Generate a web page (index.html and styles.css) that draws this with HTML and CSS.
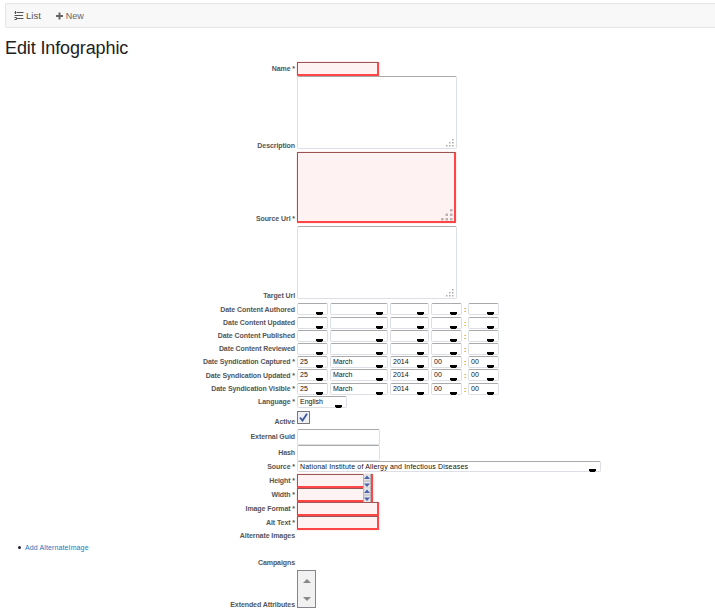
FILE: index.html
```html
<!DOCTYPE html>
<html lang="en">
<head>
<meta charset="utf-8">
<title>Edit Infographic</title>
<link rel="stylesheet" href="styles.css">
</head>
<body>
<nav class="navbar">
  <a class="nav-item"><svg class="icon" width="10" height="9" viewBox="0 0 10 9"><path d="M3 1.500h6.500M2 4.500h7M3 7.500h6.500" stroke="#555" stroke-width="1.200"/><path d="M.5 1.500h2M1.500 0v3M.5 4.500h2M.5 6.500h2v2h-2" fill="none" stroke="#555"/></svg><span class="nav-list">List</span></a>
  <a class="nav-item"><svg class="icon" width="8" height="8" viewBox="0 0 8 8"><path d="M3.500 .5v7M0 4h7" stroke="#666" stroke-width="2"/></svg><span class="nav-new">New</span></a>
</nav>
<h1>Edit Infographic</h1>
<form>
  <div class="row h14"><label>Name *</label><input class="error w82" type="text"></div>
  <div class="row tall area"><label>Description</label><div class="area-box"><textarea></textarea><svg class="grip" width="8" height="8" viewBox="0 0 8 8"><path d="M6 0h1.500v1.500H6zM3 3h1.500v1.500H3zM6 3h1.500v1.500H6zM0 6h1.500v1.500H0zM3 6h1.500v1.500H3zM6 6h1.500v1.500H6z"/></svg></div></div>
  <div class="row tall area-error"><label>Source Url *</label><div class="area-box"><textarea class="error"></textarea><svg class="grip big" width="12" height="12" viewBox="0 0 12 12"><path d="M9 0h2.500v2.500H9zM4.500 4.500H7V7H4.500zM9 4.500h2.500V7H9zM0 9h2.500v2.500H0zM4.500 9H7v2.500H4.500zM9 9h2.500v2.500H9z"/></svg></div></div>
  <div class="row tall area last"><label>Target Url</label><div class="area-box"><textarea></textarea><svg class="grip" width="8" height="8" viewBox="0 0 8 8"><path d="M6 0h1.500v1.500H6zM3 3h1.500v1.500H3zM6 3h1.500v1.500H6zM0 6h1.500v1.500H0zM3 6h1.500v1.500H3zM6 6h1.500v1.500H6z"/></svg></div></div>

  <div class="row date h14"><label>Date Content Authored</label><span class="select w31"></span><span class="select w58"></span><span class="select w39"></span><span class="select w31"></span><i>:</i><span class="select w31"></span></div>
  <div class="row date raised h13"><label>Date Content Updated</label><span class="select w31"></span><span class="select w58"></span><span class="select w39"></span><span class="select w31"></span><i>:</i><span class="select w31"></span></div>
  <div class="row date raised h13"><label>Date Content Published</label><span class="select w31"></span><span class="select w58"></span><span class="select w39"></span><span class="select w31"></span><i>:</i><span class="select w31"></span></div>
  <div class="row date raised h13"><label>Date Content Reviewed</label><span class="select w31"></span><span class="select w58"></span><span class="select w39"></span><span class="select w31"></span><i>:</i><span class="select w31"></span></div>
  <div class="row date raised h13"><label>Date Syndication Captured *</label><span class="select w31">25</span><span class="select w58">March</span><span class="select w39">2014</span><span class="select w31">00</span><i>:</i><span class="select w31">00</span></div>
  <div class="row date h14"><label>Date Syndication Updated *</label><span class="select w31">25</span><span class="select w58">March</span><span class="select w39">2014</span><span class="select w31">00</span><i>:</i><span class="select w31">00</span></div>
  <div class="row date raised h13"><label>Date Syndication Visible *</label><span class="select w31">25</span><span class="select w58">March</span><span class="select w39">2014</span><span class="select w31">00</span><i>:</i><span class="select w31">00</span></div>
  <div class="row language"><label>Language *</label><span class="select w50">English</span></div>
  <div class="row active"><label>Active</label><span class="check"><svg width="9" height="9" viewBox="0 0 9 9"><path d="M1 4.500l2.500 3L8 .8" fill="none" stroke="#3f5a9c" stroke-width="1.900"/></svg></span></div>
  <div class="row plain"><label>External Guid</label><input class="w83" type="text"></div>
  <div class="row plain"><label>Hash</label><input class="w83" type="text"></div>
  <div class="row source"><label>Source *</label><span class="select w304">National Institute of Allergy and Infectious Diseases</span></div>
  <div class="row h14"><label>Height *</label><span class="number error"><svg width="8" height="14" viewBox="0 0 8 14"><path d="M0 0h8v14H0z" fill="#e4e4e8"/><path d="M1 5l3-3.500L7 5zM1 9.500L4 13l3-3.500z" fill="#4b63a8"/><path d="M0 7h8M.5 0v14M7.500 0v14" stroke="#b5b5ba"/></svg></span></div>
  <div class="row h14"><label>Width *</label><span class="number error"><svg width="8" height="14" viewBox="0 0 8 14"><path d="M0 0h8v14H0z" fill="#e4e4e8"/><path d="M1 5l3-3.500L7 5zM1 9.500L4 13l3-3.500z" fill="#4b63a8"/><path d="M0 7h8M.5 0v14M7.500 0v14" stroke="#b5b5ba"/></svg></span></div>
  <div class="row h14"><label>Image Format *</label><input class="error w82" type="text"></div>
  <div class="row h14"><label>Alt Text *</label><input class="error w82" type="text"></div>
  <div class="row raised h12"><label>Alternate Images</label></div>
  <ul><li><a>Add AlternateImage</a></li></ul>
  <div class="row campaigns"><label>Campaigns</label></div>
  <div class="row tall extended"><label>Extended Attributes</label><span class="listbox"><svg width="8" height="26" viewBox="0 0 8 26"><path d="M0 7l4-4 4 4zM0 21l4 4 4-4z" fill="#888"/></svg></span></div>
</form>
</body>
</html>
```
FILE: styles.css
```css
* { box-sizing: border-box; }
html { overflow: hidden; }
body {
  margin: 0;
  height: 609px;
  overflow: hidden;
  padding: 3px 0 0 5px;
  background: #fff;
  color: #333;
  font-family: "Liberation Sans", Arial, sans-serif;
}
.navbar {
  display: flex;
  gap: 15px;
  height: 25px;
  padding-left: 8px;
  align-items: center;
  background: #f8f8f8;
  border: 1px solid #e5e5e5;
  border-right: 0;
  border-radius: 2px 0 0 2px;
}
.nav-item { display: flex; align-items: center; gap: 2px; font-size: 9px; line-height: 12px; color: #666; }
.nav-list { font-size: 9.5px; color: #555; }
h1 { margin: 10px 0 3px; height: 21px; font-size: 18px; line-height: 21px; font-weight: 400; letter-spacing: -.12px; color: #222; }
form { font-size: 7px; }
.row { display: flex; align-items: flex-start; gap: 2px; }
label {
  width: 290px;
  flex: none;
  text-align: right;
  font-weight: 700;
  line-height: 9px;
  letter-spacing: -.08px;
  color: #555;
  white-space: nowrap;
  margin-top: 2px;
}
.raised label { margin-top: 1px; }
.h12 { height: 12px; }
.h13 { height: 13px; }
.h14 { height: 14px; }
.tall { align-items: flex-end; }
.area label, .extended label { margin-bottom: -1px; }
input, textarea, .select, .number {
  appearance: none;
  display: block;
  margin: 0;
  padding: 0;
  background: #fff;
  border: 1px solid #dcdfe6;
  border-top-color: #aaa;
  border-radius: 2px;
  outline: 0;
  resize: none;
}
input { height: 16px; }
.error {
  height: 14px;
  background: #fff2f2;
  border: 1px solid #955;
  border-right: 2px solid #ff4545;
  border-bottom: 2px solid #ff4545;
  border-radius: 1px;
  box-shadow: 0 0 1px #f66;
}
.w31 { width: 31px; }
.w39 { width: 39px; }
.w50 { width: 50px; }
.w58 { width: 58px; }
.w82 { width: 82px; }
.w83 { width: 83px; }
.w304 { width: 304px; }
.area { height: 73px; margin-bottom: 3px; }
.area-box { position: relative; height: 100%; }
.area textarea { width: 160px; height: 73px; }
.area-error { height: 71px; margin-bottom: 3px; }
.area-error textarea { width: 159px; height: 71px; }
.area.last { margin-bottom: 4px; }
.grip { position: absolute; right: 3px; bottom: 2px; fill: #aaa; }
.grip.big { right: 3px; bottom: 2px; fill: #bfb0b3; }
.select {
  position: relative;
  height: 12px;
  padding-left: 2px;
  line-height: 10px;
  color: #111;
  white-space: nowrap;
}
.select::after {
  content: "";
  position: absolute;
  right: 4px;
  bottom: -1px;
  width: 7px;
  height: 3px;
  background: #000;
  clip-path: polygon(0 0, 100% 0, 100% 50%, 80% 100%, 20% 100%, 0 50%);
}
.date i { width: 2px; margin: 2px 0 0; font-style: normal; font-weight: 700; line-height: 9px; color: #b77d3f; }
.language { height: 15px; }
.language label { margin-top: 1px; }
.active { height: 18px; }
.active label { margin-top: 6px; }
.check {
  display: flex;
  align-items: center;
  justify-content: center;
  width: 13px;
  height: 13px;
  background: #eef0f4;
  border: 1px solid #777;
}
.plain { height: 16px; }
.plain label { margin-top: 3px; }
.source { height: 13px; }
.source label { margin-top: 1px; }
.source .select { height: 11px; letter-spacing: .17px; }
.number { position: relative; width: 76px; }
.number svg { position: absolute; right: 0; top: -1px; }
ul { margin: 0; padding: 0 0 0 20px; height: 14px; line-height: 9px; font-size: 7px; letter-spacing: .12px; color: #222; list-style: none; }
li { padding-top: 1px; }
li::before {
  content: "";
  display: inline-block;
  width: 3px;
  height: 3px;
  margin: 0 4px 1px -7px;
  border-radius: 50%;
  background: #223;
}
a { color: #1978c0; }
.campaigns { height: 14px; }
.campaigns label { margin-top: 2px; }
.extended { height: 38px; }
.listbox {
  display: flex;
  align-items: center;
  justify-content: center;
  width: 19px;
  height: 38px;
  background: #f1f1f2;
  border: 1px solid #84848c;
}
```
